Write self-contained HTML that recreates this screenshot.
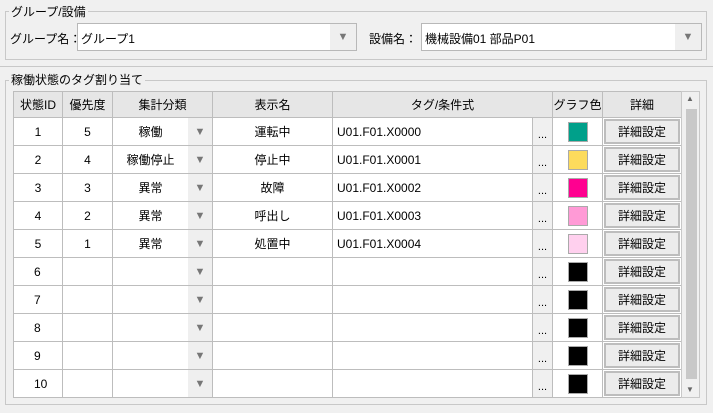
<!DOCTYPE html>
<html><head><meta charset="utf-8"><style>
*{box-sizing:border-box;margin:0;padding:0}
body{width:713px;height:413px;background:#f0f0f0;font-family:"Liberation Sans","Noto Sans CJK JP",sans-serif;font-size:12px;color:#000;position:relative;overflow:hidden}
.a{position:absolute}
.grp{position:absolute;border:1px solid #c8c8c8}
.leg{position:absolute;background:#f0f0f0;padding:0 2px;font-size:12px;line-height:14px}
.combo{position:absolute;background:#fff;border:1px solid #b8b8b8;height:28px}
.combo span{position:absolute;left:3px;top:6px}
.combo .dd{position:absolute;right:0;top:0;width:26px;height:26px;background:#efefef;color:#777;font-size:11px;text-align:center;line-height:27px}
table{position:absolute;left:13px;top:91px;border-collapse:collapse;background:#fff}
td,th{border:1px solid #bdbdbd;height:28px;padding:0;font-weight:normal;text-align:center;position:relative}
th{background:#e6e6e6;height:26px}
.tag{text-align:left;padding-left:4px}
.dots{background:#f0f0f0;font-size:11px;padding-top:6px}
.cat{padding-right:24px}
.sel{position:absolute;right:0;top:0;bottom:0;width:24px;background:#efefef;color:#777;font-size:11px;line-height:28px;text-align:center}
.sw{display:inline-block;width:20px;height:20px;border:1px solid #aaa;vertical-align:middle}
.btn{position:absolute;left:1px;top:1px;right:1px;bottom:1px;background:#ececec;border:2px solid #bdbdbd;line-height:22px}
</style></head><body>
<div class="grp" style="left:5px;top:11px;width:702px;height:49px"></div>
<div class="leg" style="left:9px;top:5px">グループ/設備</div>
<div class="a" style="left:10px;top:30px">グループ名：</div>
<div class="combo" style="left:77px;top:23px;width:280px"><span>グループ1</span><div class="dd">▼</div></div>
<div class="a" style="left:369px;top:30px">設備名：</div>
<div class="combo" style="left:421px;top:23px;width:281px"><span>機械設備01 部品P01</span><div class="dd">▼</div></div>
<div class="a" style="left:0;top:66px;width:713px;height:1px;background:#c8c8c8"></div>
<div class="grp" style="left:5px;top:80px;width:702px;height:325px"></div>
<div class="leg" style="left:9px;top:73px">稼働状態のタグ割り当て</div>
<table>
<tr><th style="width:49px">状態ID</th><th style="width:50px">優先度</th><th style="width:100px">集計分類</th><th style="width:120px">表示名</th><th colspan="2" style="width:220px">タグ/条件式</th><th style="width:50px">グラフ色</th><th style="width:79px">詳細</th></tr>
<tr><td>1</td><td>5</td><td class="cat">稼働<div class="sel">▼</div></td><td>運転中</td><td class="tag" style="width:200px">U01.F01.X0000</td><td class="dots" style="width:20px">...</td><td><span class="sw" style="background:#00a08a"></span></td><td><div class="btn">詳細設定</div></td></tr>
<tr><td>2</td><td>4</td><td class="cat">稼働停止<div class="sel">▼</div></td><td>停止中</td><td class="tag">U01.F01.X0001</td><td class="dots">...</td><td><span class="sw" style="background:#fcdb5c"></span></td><td><div class="btn">詳細設定</div></td></tr>
<tr><td>3</td><td>3</td><td class="cat">異常<div class="sel">▼</div></td><td>故障</td><td class="tag">U01.F01.X0002</td><td class="dots">...</td><td><span class="sw" style="background:#ff0090"></span></td><td><div class="btn">詳細設定</div></td></tr>
<tr><td>4</td><td>2</td><td class="cat">異常<div class="sel">▼</div></td><td>呼出し</td><td class="tag">U01.F01.X0003</td><td class="dots">...</td><td><span class="sw" style="background:#ff9ad6"></span></td><td><div class="btn">詳細設定</div></td></tr>
<tr><td>5</td><td>1</td><td class="cat">異常<div class="sel">▼</div></td><td>処置中</td><td class="tag">U01.F01.X0004</td><td class="dots">...</td><td><span class="sw" style="background:#ffd0ee"></span></td><td><div class="btn">詳細設定</div></td></tr>
<tr><td style="text-align:left;padding-left:20px">6</td><td></td><td><div class="sel">▼</div></td><td></td><td></td><td class="dots">...</td><td><span class="sw" style="background:#000"></span></td><td><div class="btn">詳細設定</div></td></tr>
<tr><td style="text-align:left;padding-left:20px">7</td><td></td><td><div class="sel">▼</div></td><td></td><td></td><td class="dots">...</td><td><span class="sw" style="background:#000"></span></td><td><div class="btn">詳細設定</div></td></tr>
<tr><td style="text-align:left;padding-left:20px">8</td><td></td><td><div class="sel">▼</div></td><td></td><td></td><td class="dots">...</td><td><span class="sw" style="background:#000"></span></td><td><div class="btn">詳細設定</div></td></tr>
<tr><td style="text-align:left;padding-left:20px">9</td><td></td><td><div class="sel">▼</div></td><td></td><td></td><td class="dots">...</td><td><span class="sw" style="background:#000"></span></td><td><div class="btn">詳細設定</div></td></tr>
<tr><td style="text-align:left;padding-left:20px">10</td><td></td><td><div class="sel">▼</div></td><td></td><td></td><td class="dots">...</td><td><span class="sw" style="background:#000"></span></td><td><div class="btn">詳細設定</div></td></tr>
</table>
<div class="a" style="left:681px;top:91px;width:19px;height:307px;background:#f0f0f0;border:1px solid #c8c8c8"></div>
<div class="a" style="left:686px;top:94px;font-size:8px;color:#666">▲</div>
<div class="a" style="left:686px;top:109px;width:11px;height:270px;background:#c8c8c8"></div>
<div class="a" style="left:686px;top:385px;font-size:8px;color:#666">▼</div>
</body></html>
